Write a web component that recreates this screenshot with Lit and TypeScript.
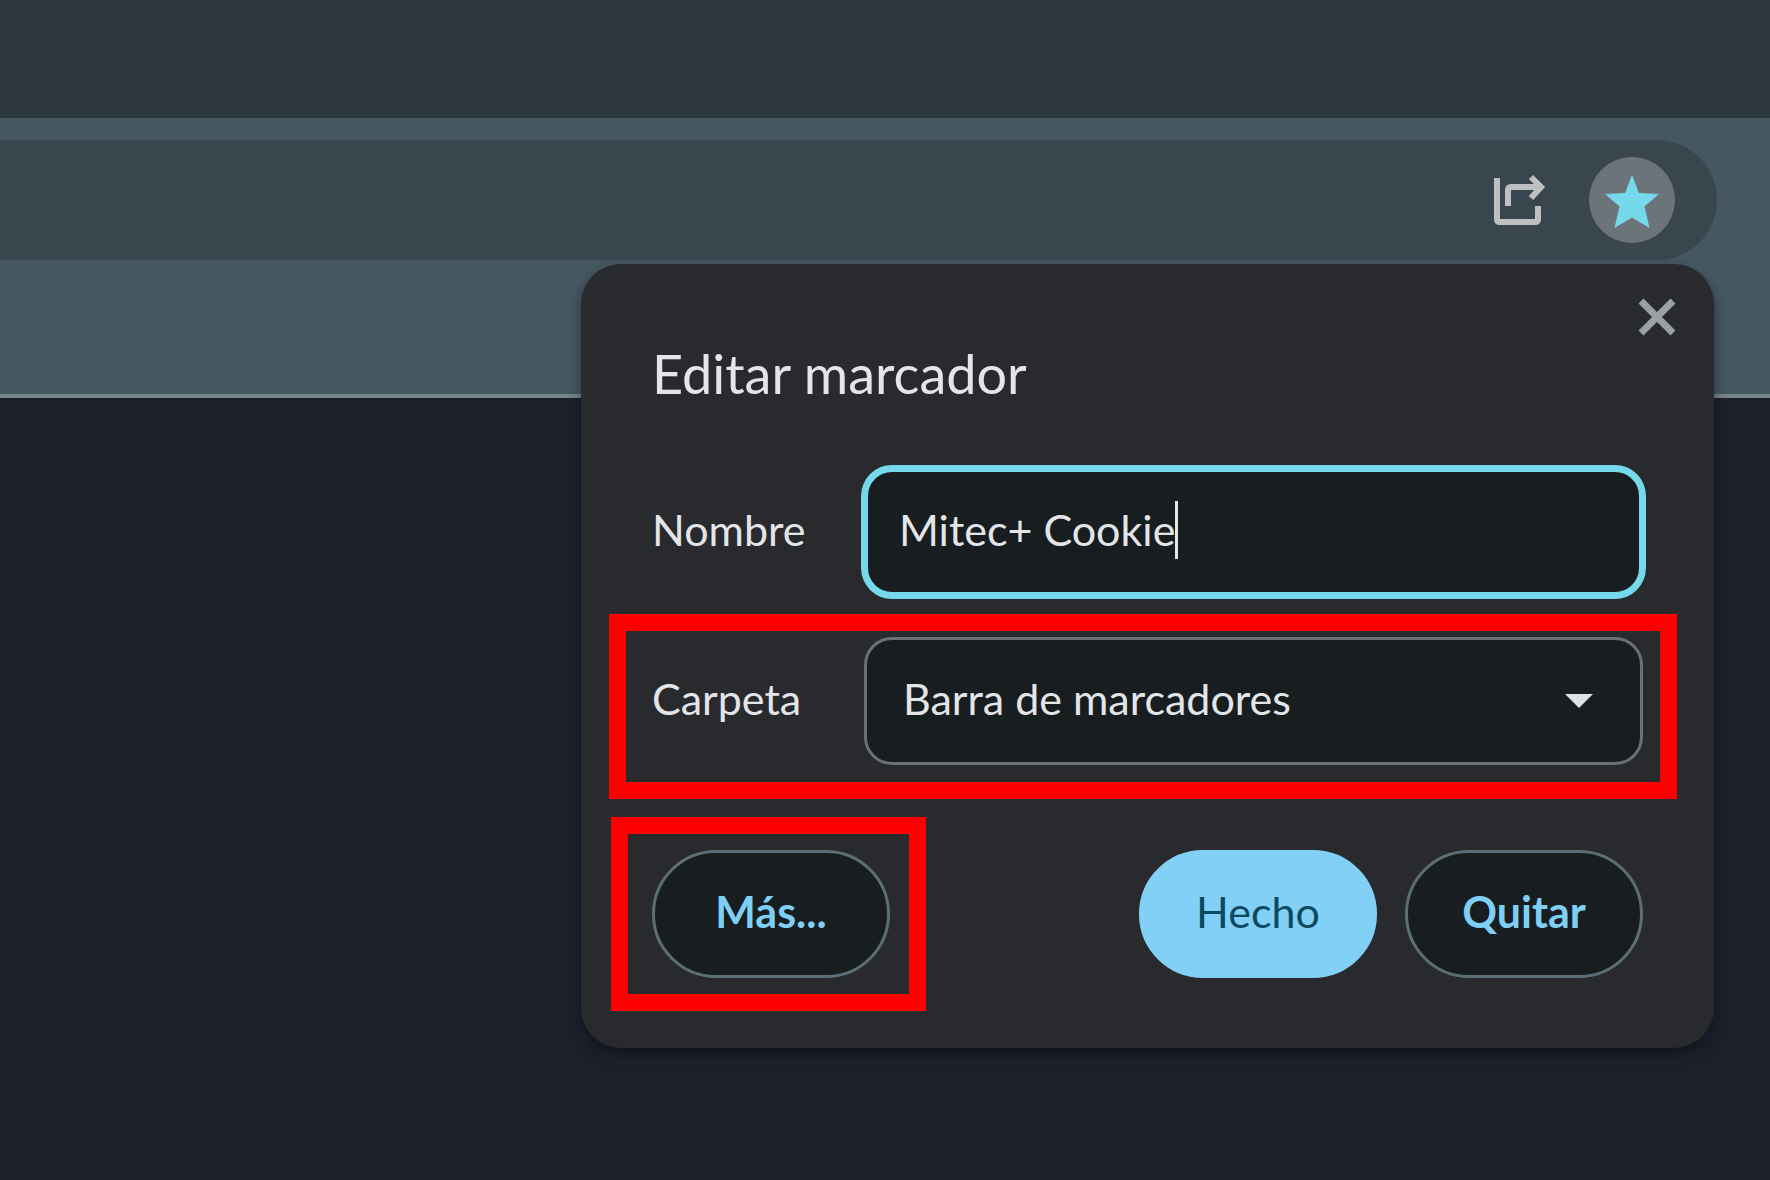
import { LitElement, html, css } from "lit";
import { customElement, property, state } from "lit/decorators.js";

@customElement("browser-toolbar")
export class BrowserToolbar extends LitElement {
  static styles = css`
    :host {
      display: block;
    }
    .tabs {
      height: 118px;
      background: #2d383d;
    }
    .toolbar {
      box-sizing: border-box;
      height: 280px;
      padding: 22px 53px 0 0;
      background: #455760;
      border-bottom: 4px solid #76838a;
    }
    .omnibox {
      box-sizing: border-box;
      display: flex;
      align-items: center;
      justify-content: flex-end;
      gap: 40px;
      height: 120px;
      padding-right: 42px;
      border-radius: 0 60px 60px 0;
      background: #39464d;
    }
    .icon-button {
      display: block;
      padding: 0;
      border: 0;
      background: none;
      cursor: pointer;
    }
    .share {
      width: 64px;
      height: 64px;
    }
    .star {
      width: 86px;
      height: 86px;
      border-radius: 50%;
      background: #6c7479;
    }
    svg {
      display: block;
      width: 100%;
      height: 100%;
    }
  `;

  render() {
    return html`
      <div class="tabs"></div>
      <div class="toolbar">
        <div class="omnibox">
          <button class="icon-button share" aria-label="Compartir">
            <svg viewBox="0 0 64 64" fill="none" stroke="#bdbfc0" stroke-width="6">
              <path d="M12 10V51Q12 54 15 54H50Q53 54 53 51V38" />
              <path d="M23 38V22Q23 19 26 19H54" />
              <path d="M46 9L56 19L46 30" />
            </svg>
          </button>
          <button class="icon-button star" aria-label="Editar marcador de esta pestaña">
            <svg viewBox="0 0 86 86">
              <path
                d="M43 18L50 36L70 37L55.500 49.500L60.500 71L43 60.500L25.500 71L30.500 49.500L16 37L36 36Z"
                fill="#75d8eb"
              />
            </svg>
          </button>
        </div>
      </div>
    `;
  }
}

@customElement("bookmark-dialog")
export class BookmarkDialog extends LitElement {
  static styles = css`
    :host {
      display: block;
      box-sizing: border-box;
      padding: 0 71px 70px;
      border-radius: 40px;
      background: #292a2d;
      box-shadow: 0 6px 12px rgba(10, 10, 18, 0.5);
      color: #e3e5e8;
      font-family: Lato, "Open Sans", sans-serif;
      font-size: 43px;
      line-height: 56px;
    }
    .top {
      display: flex;
      justify-content: flex-end;
      height: 78px;
      margin-right: -39px;
      padding-top: 28px;
      box-sizing: border-box;
    }
    .close {
      width: 50px;
      height: 50px;
      padding: 0;
      border: 0;
      background: none;
      cursor: pointer;
    }
    .close svg {
      display: block;
    }
    h1 {
      margin: 0 0 62px;
      font-size: 54px;
      line-height: 64px;
      font-weight: 400;
    }
    .row {
      position: relative;
      display: grid;
      grid-template-columns: 212px 1fr;
      align-items: center;
      margin-bottom: 41px;
    }
    .row.last {
      margin-bottom: 85px;
    }
    label {
      padding-bottom: 4px;
    }
    .field {
      box-sizing: border-box;
      display: flex;
      align-items: center;
      height: 128px;
      padding-left: 36px;
      border: 3px solid #6b7073;
      border-radius: 28px;
      background: #181d1f;
    }
    .field.focused {
      padding-left: 31px;
      border-width: 4px;
      border-color: #75d8eb;
      box-shadow: 0 0 0 3px #75d8eb;
    }
    input {
      field-sizing: content;
      min-width: 0;
      padding: 0 0 4px;
      border: 0;
      outline: 0;
      background: none;
      color: inherit;
      font: inherit;
      caret-color: transparent;
    }
    .caret {
      width: 3px;
      height: 58px;
      margin-bottom: 4px;
      background: #e3e5e8;
    }
    .field.picker {
      padding-left: 0;
      padding-right: 47px;
    }
    select {
      flex: 1;
      min-width: 0;
      height: 100%;
      padding: 0 0 4px 36px;
      border: 0;
      outline: 0;
      appearance: none;
      background: none;
      color: inherit;
      font: inherit;
    }
    .arrow {
      width: 28px;
      height: 14px;
    }
    .mark {
      position: absolute;
      border: 17px solid #ff0000;
      pointer-events: none;
    }
    .mark.wide {
      inset: -23px -34px -34px -43px;
    }
    .mark.small {
      inset: -33px -36px -33px -41px;
    }
    .actions {
      display: flex;
      gap: 28px;
    }
    .more {
      position: relative;
      margin-right: auto;
    }
    .action {
      display: block;
      box-sizing: border-box;
      width: 238px;
      height: 128px;
      padding: 0 0 4px;
      border: 3px solid #5c6e76;
      border-radius: 64px;
      background: #181d1f;
      color: #7fcff5;
      font: inherit;
      font-weight: 700;
    }
    .action.primary {
      border-color: #82d0f6;
      background: #82d0f6;
      color: #0c4a61;
      font-weight: 400;
    }
  `;

  @property() name = "Mitec+ Cookie";
  @state() private folder = "Barra de marcadores";

  private onName(e: Event) {
    this.name = (e.target as HTMLInputElement).value;
  }

  private onFolder(e: Event) {
    this.folder = (e.target as HTMLSelectElement).value;
  }

  render() {
    return html`
      <div class="top">
        <button class="close" aria-label="Cerrar">
          <svg width="50" height="50" viewBox="0 0 50 50" stroke="#9aa0a6" stroke-width="7">
            <path d="M9 9L41 41M41 9L9 41" />
          </svg>
        </button>
      </div>
      <h1>Editar marcador</h1>
      <div class="row">
        <label for="name">Nombre</label>
        <div class="field focused">
          <input id="name" type="text" .value=${this.name} @input=${this.onName} />
          <span class="caret"></span>
        </div>
      </div>
      <div class="row last">
        <label for="folder">Carpeta</label>
        <div class="field picker">
          <select id="folder" .value=${this.folder} @change=${this.onFolder}>
            <option>Barra de marcadores</option>
          </select>
          <svg class="arrow" viewBox="0 0 28 14"><path d="M0 0H28L14 14Z" fill="#dfe1e5" /></svg>
        </div>
        <div class="mark wide"></div>
      </div>
      <div class="actions">
        <div class="more">
          <button class="action">Más...</button>
          <div class="mark small"></div>
        </div>
        <button class="action primary">Hecho</button>
        <button class="action">Quitar</button>
      </div>
    `;
  }
}

@customElement("app-root")
export class AppRoot extends LitElement {
  static styles = css`
    :host {
      position: relative;
      display: block;
      min-height: 100vh;
      overflow: hidden;
      background: #1b202b;
    }
    .popup {
      position: absolute;
      top: 264px;
      right: 56px;
      width: 1133px;
    }
  `;

  render() {
    return html`
      <browser-toolbar></browser-toolbar>
      <bookmark-dialog class="popup"></bookmark-dialog>
    `;
  }
}
